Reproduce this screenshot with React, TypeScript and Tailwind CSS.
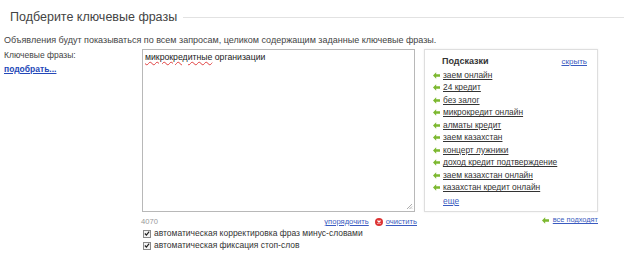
import React from 'react';

const hints = [
  'заем онлайн',
  '24 кредит',
  'без залог',
  'микрокредит онлайн',
  'алматы кредит',
  'заем казахстан',
  'концерт лужники',
  'доход кредит подтверждение',
  'заем казахстан онлайн',
  'казахстан кредит онлайн',
];

function GreenArrow() {
  return (
    <svg width="7" height="7" viewBox="0 0 7 7" className="shrink-0">
      <path d="M0 3.5 L3.2 0.3 L3.2 2.3 L7 2.3 L7 4.7 L3.2 4.7 L3.2 6.7 Z" fill="#7cb82f" />
    </svg>
  );
}

function Check() {
  return (
    <span className="w-[8px] h-[8px] border border-[#8a8a8a] bg-[#f4f4f4] flex items-center justify-center shrink-0">
      <svg width="7" height="7" viewBox="0 0 7 7">
        <path d="M1 3.5 L2.8 5.3 L6 1.3" stroke="#222" strokeWidth="1.4" fill="none" />
      </svg>
    </span>
  );
}

export default function App() {
  return (
    <div className="w-[624px] h-[253px] bg-white overflow-hidden text-[#333] font-['Liberation_Sans',Arial,sans-serif] pl-[4px]">
      {/* Title */}
      <div className="flex items-center pl-[6px] pt-[8px] h-[26px]">
        <span className="text-[12.5px] leading-[16px] text-[#444]">Подберите ключевые фразы</span>
        <div className="flex-1 h-px bg-[#e2e2e2] ml-[6px] mt-[1px]" />
      </div>

      <div className="mt-[8px] text-[9px] leading-[12px] text-[#444]">
        Объявления будут показываться по всем запросам, целиком содержащим заданные ключевые фразы.
      </div>

      <div className="flex mt-[3px]">
        {/* Label */}
        <div className="w-[138px] leading-[11px] pt-[1px]">
          <div className="text-[8.5px] text-[#444]">Ключевые фразы:</div>
          <a className="text-[8.5px] font-bold text-[#2448b8] underline">подобрать...</a>
        </div>

        {/* Textarea column */}
        <div className="w-[273px]">
          <div className="relative h-[163px] border border-[#b8b8b8] px-[2px] py-[2px] text-[8.7px] leading-[11px] text-[#222]">
            <span className="underline decoration-wavy decoration-[#e04040] decoration-[0.5px] underline-offset-[1px]">микрокредитные</span> организации
            <svg width="7" height="7" viewBox="0 0 7 7" className="absolute right-[1px] bottom-[1px]">
              <path d="M6 1 L1 6 M6 3.5 L3.5 6 M6 5.5 L5.5 6" stroke="#999" strokeWidth="0.8" />
            </svg>
          </div>
          <div className="flex items-center mt-[5px] text-[7.6px] leading-[10px]">
            <span className="text-[#999] ml-[-1px]">4070</span>
            <a className="ml-auto text-[#3a5bc0] underline">упорядочить</a>
            <span className="ml-[6px] w-[8px] h-[8px] rounded-full bg-[#d33] flex items-center justify-center">
              <svg width="6" height="6" viewBox="0 0 6 6">
                <path d="M1.5 1.5 L4.5 4.5 M4.5 1.5 L1.5 4.5" stroke="white" strokeWidth="1.2" />
              </svg>
            </span>
            <a className="ml-[3px] text-[#3a5bc0] underline mr-[-2px]">очистить</a>
          </div>
          <div className="mt-[1px] text-[8.5px] leading-[11px] text-[#333]">
            <label className="flex items-center gap-[3px] ml-[1px]">
              <Check />
              автоматическая корректировка фраз минус-словами
            </label>
            <label className="flex items-center gap-[3px] ml-[1px] mt-[1px]">
              <Check />
              автоматическая фиксация стоп-слов
            </label>
          </div>
        </div>

        {/* Hints panel */}
        <div className="ml-[9px] w-[174px]">
          <div className="h-[163px] border border-[#dedede] shadow-[0_0_2px_rgba(0,0,0,0.08)] pt-[6px] pl-[8px] pr-[10px]">
            <div className="flex items-center justify-between h-[12px]">
              <span className="ml-[9px] text-[9px] font-bold text-[#333]">Подсказки</span>
              <a className="text-[8px] text-[#3a5bc0] underline">скрыть</a>
            </div>
            <div className="mt-[1px]">
              {hints.map((h) => (
                <div key={h} className="flex items-center h-[12.5px] text-[8.4px]">
                  <GreenArrow />
                  <a className="ml-[3px] text-[#333] underline">{h}</a>
                </div>
              ))}
            </div>
            <a className="block ml-[10px] mt-[1px] text-[8.4px] text-[#3a5bc0] underline">еще</a>
          </div>
          <div className="flex items-center justify-end mt-[3px] text-[7.4px] leading-[10px]">
            <GreenArrow />
            <a className="ml-[4px] text-[#3a5bc0] underline">все подходят</a>
          </div>
        </div>
      </div>
    </div>
  );
}
